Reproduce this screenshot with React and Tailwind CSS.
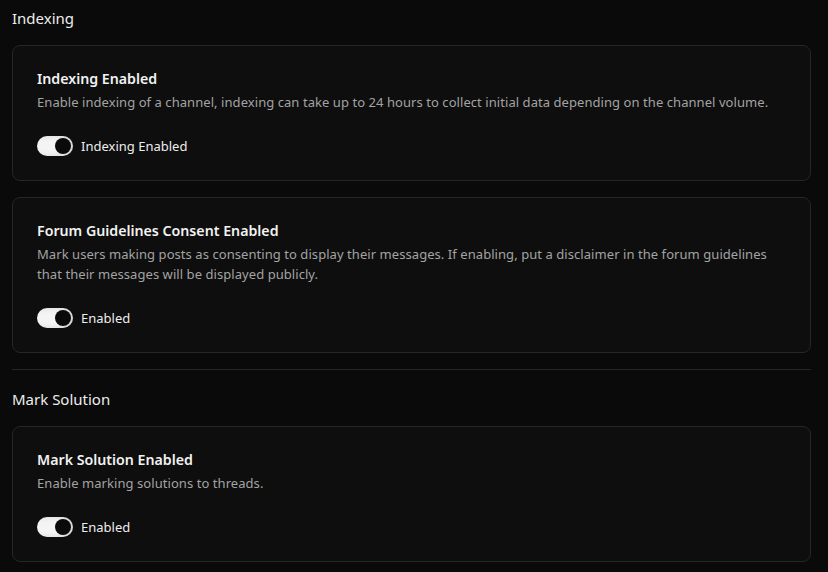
const sections = [
  {
    title: "Indexing",
    cards: [
      {
        name: "Indexing Enabled",
        desc: "Enable indexing of a channel, indexing can take up to 24 hours to collect initial data depending on the channel volume.",
        label: "Indexing Enabled",
      },
      {
        name: "Forum Guidelines Consent Enabled",
        desc: "Mark users making posts as consenting to display their messages. If enabling, put a disclaimer in the forum guidelines that their messages will be displayed publicly.",
        label: "Enabled",
      },
    ],
  },
  {
    title: "Mark Solution",
    cards: [
      {
        name: "Mark Solution Enabled",
        desc: "Enable marking solutions to threads.",
        label: "Enabled",
      },
    ],
  },
];

function Toggle({ on }) {
  return (
    <span
      className={
        "flex h-5 w-9 items-center rounded-full p-[2px] shadow-[inset_-6px_0_6px_rgba(0,0,0,0.12)] " +
        (on ? "justify-end bg-[#f4f4f4]" : "justify-start bg-[#3a3a3a]")
      }
    >
      <span className="h-4 w-4 rounded-full bg-[#0a0a0a]" />
    </span>
  );
}

function SettingCard({ name, desc, label }) {
  return (
    <div className="rounded-lg border border-[#262626] bg-[#0e0e0e] px-[24px] pt-[23px] pb-[24px]">
      <h3 className="text-[14.2px] font-semibold leading-5 text-[#f2f2f2]">{name}</h3>
      <p className="mt-[3px] text-[13px] tracking-[0.06px] leading-5 text-[#a3a3a3] max-w-[750px]">{desc}</p>
      <label className="mt-[24px] flex items-center gap-2 text-[13px] leading-5 text-[#ededed]">
        <Toggle on />
        <span>{label}</span>
      </label>
    </div>
  );
}

export default function App() {
  return (
    <div
      className="min-h-screen bg-[#0a0a0a] pl-3 pr-[17px] pt-[7px]"
      style={{ fontFamily: '"Noto Sans", "Open Sans", sans-serif' }}
    >
      {sections.map((s, i) => (
        <div key={s.title}>
          {i > 0 && <div className="mt-[16px] mb-[18px] h-px bg-[#262626]" />}
          <h2 className="text-[15px] leading-[22px] text-[#ededed]">{s.title}</h2>
          <div className="mt-[16px] flex flex-col gap-4">
            {s.cards.map((c) => (
              <SettingCard key={c.name} {...c} />
            ))}
          </div>
        </div>
      ))}
    </div>
  );
}
